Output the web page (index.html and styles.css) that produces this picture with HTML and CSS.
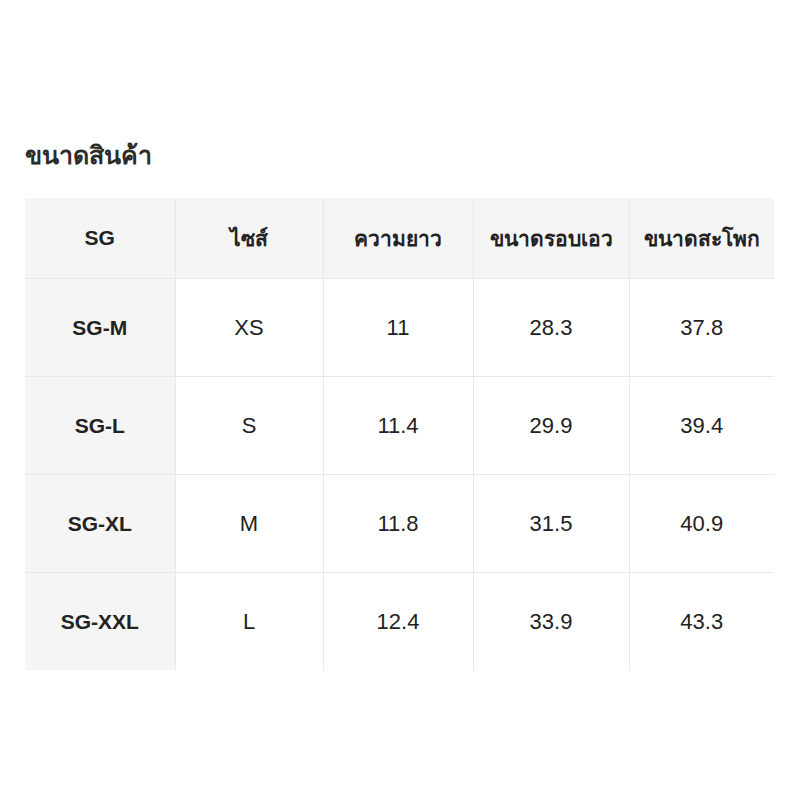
FILE: index.html
```html
<!DOCTYPE html>
<html lang="th">
<head>
<meta charset="utf-8">
<link rel="stylesheet" href="styles.css">
</head>
<body>
<div class="page">
  <h2 class="title">ขนาดสินค้า</h2>
  <table class="size-table">
    <colgroup>
      <col class="c1"><col class="c2"><col class="c3"><col class="c4"><col class="c5">
    </colgroup>
    <thead>
      <tr><th>SG</th><th>ไซส์</th><th>ความยาว</th><th>ขนาดรอบเอว</th><th>ขนาดสะโพก</th></tr>
    </thead>
    <tbody>
      <tr><th>SG-M</th><td>XS</td><td>11</td><td>28.3</td><td>37.8</td></tr>
      <tr><th>SG-L</th><td>S</td><td>11.4</td><td>29.9</td><td>39.4</td></tr>
      <tr><th>SG-XL</th><td>M</td><td>11.8</td><td>31.5</td><td>40.9</td></tr>
      <tr><th>SG-XXL</th><td>L</td><td>12.4</td><td>33.9</td><td>43.3</td></tr>
    </tbody>
  </table>
</div>
</body>
</html>
```
FILE: styles.css
```css
html, body {
  margin: 0;
  padding: 0;
  background: #ffffff;
}
body {
  font-family: "Liberation Sans", Arial, "Noto Sans", sans-serif;
  color: #222222;
}
.page {
  padding: 139px 0 0 25px;
}
.title {
  margin: 0 0 27px 0;
  font-size: 25px;
  line-height: 32px;
  font-weight: 700;
  color: #2b2b2b;
}
.size-table {
  border-collapse: collapse;
  table-layout: fixed;
  width: 749px;
}
.c1 { width: 150px; }
.c2 { width: 148px; }
.c3 { width: 150px; }
.c4 { width: 156px; }
.c5 { width: 145px; }
.size-table th,
.size-table td {
  border: 1px solid #e8e8e8;
  text-align: center;
  vertical-align: middle;
  padding: 0;
  font-size: 22px;
  color: #222222;
}
.size-table tr > *:first-child { border-left: none; }
.size-table tr > *:last-child { border-right: none; }
.size-table thead th {
  border-top: none;
  height: 80px;
  background: #f5f5f5;
  font-weight: 700;
  font-size: 21px;
}
.size-table tbody tr:last-child > * { border-bottom: none; }
.size-table tbody th {
  background: #f5f5f5;
  font-weight: 700;
  font-size: 21px;
  height: 97px;
}
.size-table tbody td {
  font-weight: 400;
  height: 97px;
}
```
